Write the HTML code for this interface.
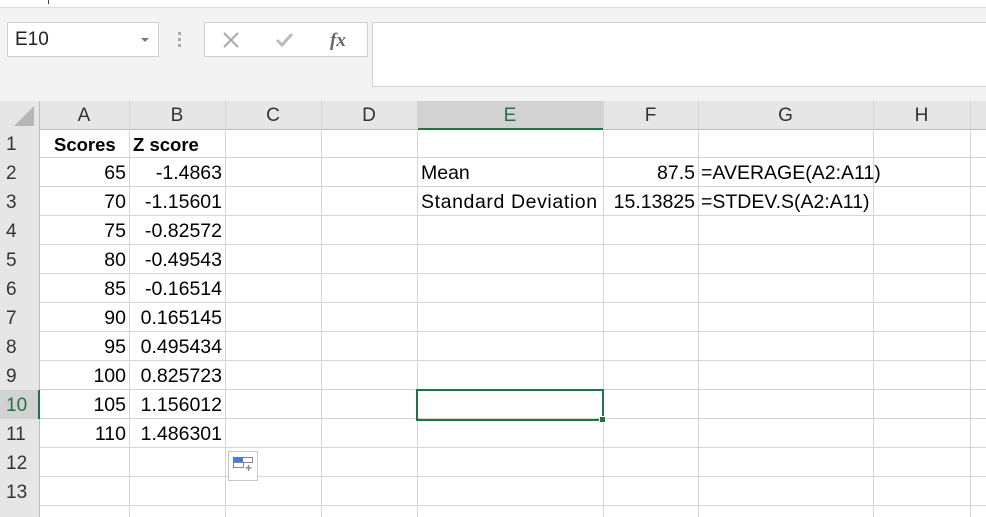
<!DOCTYPE html>
<html><head><style>
body{margin:0;width:986px;height:517px;overflow:hidden;background:#fff;font-family:"Liberation Sans",sans-serif;position:relative}
.a{position:absolute}
.t{position:absolute;font-size:19.5px;color:#000;line-height:29px;white-space:nowrap}
.r{text-align:right}
.h{position:absolute;font-size:19px;color:#333;line-height:29px;text-align:center}
.n{position:absolute;font-size:19px;color:#333;line-height:29px;left:6px}
</style></head><body>
<div class="a" style="left:0;top:0;width:986px;height:101px;background:#f3f3f3"></div>
<div class="a" style="left:0;top:0;width:986px;height:7px;background:#fff;border-bottom:1px solid #dadada"></div>
<div class="a" style="left:48px;top:0;width:1px;height:4px;background:#444"></div>
<div class="a" style="left:7px;top:22px;width:150px;height:33px;background:#fff;border:1px solid #d0d0d0"></div>
<div class="a" style="left:15px;top:22px;font-size:19px;line-height:35px;color:#222">E10</div>
<div class="a" style="left:141px;top:38px;width:0;height:0;border-left:4px solid transparent;border-right:4px solid transparent;border-top:4px solid #777"></div>
<div class="a" style="left:178px;top:32px;width:3px;height:3px;background:#aaa;box-shadow:0 6px 0 #aaa,0 12px 0 #aaa"></div>
<div class="a" style="left:204px;top:22px;width:162px;height:33px;background:#fff;border:1px solid #d0d0d0"></div>
<svg class="a" style="left:220px;top:30px" width="140" height="22"><path d="M4 3L18 17M18 3L4 17" stroke="#aaa" stroke-width="2"/><path d="M57 10l5 5l10-11" stroke="#bbb" stroke-width="3" fill="none"/><text x="110" y="16" font-family="Liberation Serif" font-style="italic" font-weight="bold" font-size="19" fill="#666">fx</text></svg>
<div class="a" style="left:372px;top:22px;width:614px;height:63px;background:#fff;border:1px solid #d0d0d0;border-right:none"></div>
<div class="a" style="left:0;top:101px;width:986px;height:28px;background:#e6e6e6;border-bottom:1px solid #bdbdbd"></div>
<div class="a" style="left:0;top:101px;width:39px;height:416px;background:#e6e6e6;border-right:1px solid #bdbdbd"></div>
<svg class="a" style="left:14px;top:106px" width="22" height="20"><path d="M20 0V20H0Z" fill="#b5b5b5"/></svg>
<div class="a" style="left:417px;top:101px;width:186px;height:27px;background:#d2d2d2;border-bottom:2px solid #217346"></div>
<div class="a" style="left:0;top:390px;width:38px;height:29px;background:#d2d2d2;border-right:2px solid #217346"></div>
<div class="a" style="left:40px;top:129px;width:946px;height:388px;background-image:repeating-linear-gradient(to bottom,transparent 0,transparent 28px,#d4d4d4 28px,#d4d4d4 29px)"></div>
<div class="a" style="left:129px;top:101px;width:1px;height:416px;background:#d4d4d4"></div>
<div class="a" style="left:225px;top:101px;width:1px;height:416px;background:#d4d4d4"></div>
<div class="a" style="left:321px;top:101px;width:1px;height:416px;background:#d4d4d4"></div>
<div class="a" style="left:417px;top:101px;width:1px;height:416px;background:#d4d4d4"></div>
<div class="a" style="left:603px;top:101px;width:1px;height:416px;background:#d4d4d4"></div>
<div class="a" style="left:698px;top:101px;width:1px;height:416px;background:#d4d4d4"></div>
<div class="a" style="left:873px;top:101px;width:1px;height:416px;background:#d4d4d4"></div>
<div class="a" style="left:970px;top:101px;width:1px;height:416px;background:#d4d4d4"></div>
<div class="h" style="left:39px;top:101px;width:90px">A</div>
<div class="h" style="left:129px;top:101px;width:96px">B</div>
<div class="h" style="left:225px;top:101px;width:96px">C</div>
<div class="h" style="left:321px;top:101px;width:96px">D</div>
<div class="h" style="left:417px;top:101px;width:186px;color:#217346">E</div>
<div class="h" style="left:603px;top:101px;width:95px">F</div>
<div class="h" style="left:698px;top:101px;width:175px">G</div>
<div class="h" style="left:873px;top:101px;width:97px">H</div>
<div class="n" style="top:130px">1</div>
<div class="n" style="top:159px">2</div>
<div class="n" style="top:188px">3</div>
<div class="n" style="top:217px">4</div>
<div class="n" style="top:246px">5</div>
<div class="n" style="top:275px">6</div>
<div class="n" style="top:304px">7</div>
<div class="n" style="top:333px">8</div>
<div class="n" style="top:362px">9</div>
<div class="n" style="top:391px;color:#217346">10</div>
<div class="n" style="top:420px">11</div>
<div class="n" style="top:449px">12</div>
<div class="n" style="top:478px">13</div>
<div class="t" style="left:54px;top:130px;font-weight:bold;font-size:18.5px">Scores</div>
<div class="t" style="left:133px;top:130px;font-weight:bold;font-size:18.5px">Z score</div>
<div class="t r" style="left:39px;top:159px;width:87px">65</div>
<div class="t r" style="left:39px;top:188px;width:87px">70</div>
<div class="t r" style="left:39px;top:217px;width:87px">75</div>
<div class="t r" style="left:39px;top:246px;width:87px">80</div>
<div class="t r" style="left:39px;top:275px;width:87px">85</div>
<div class="t r" style="left:39px;top:304px;width:87px">90</div>
<div class="t r" style="left:39px;top:333px;width:87px">95</div>
<div class="t r" style="left:39px;top:362px;width:87px">100</div>
<div class="t r" style="left:39px;top:391px;width:87px">105</div>
<div class="t r" style="left:39px;top:420px;width:87px">110</div>
<div class="t r" style="left:125px;top:159px;width:97px">-1.4863</div>
<div class="t r" style="left:125px;top:188px;width:97px">-1.15601</div>
<div class="t r" style="left:125px;top:217px;width:97px">-0.82572</div>
<div class="t r" style="left:125px;top:246px;width:97px">-0.49543</div>
<div class="t r" style="left:125px;top:275px;width:97px">-0.16514</div>
<div class="t r" style="left:125px;top:304px;width:97px">0.165145</div>
<div class="t r" style="left:125px;top:333px;width:97px">0.495434</div>
<div class="t r" style="left:125px;top:362px;width:97px">0.825723</div>
<div class="t r" style="left:125px;top:391px;width:97px">1.156012</div>
<div class="t r" style="left:125px;top:420px;width:97px">1.486301</div>
<div class="t" style="left:421px;top:159px">Mean</div>
<div class="t" style="left:421px;top:188px;letter-spacing:0.6px">Standard Deviation</div>
<div class="t r" style="left:600px;top:159px;width:95px">87.5</div>
<div class="t r" style="left:600px;top:188px;width:95px">15.13825</div>
<div class="t" style="left:701px;top:159px">=AVERAGE(A2:A11)</div>
<div class="t" style="left:701px;top:188px">=STDEV.S(A2:A11)</div>
<div class="a" style="left:416px;top:389px;width:184px;height:28px;border:2px solid #217346"></div>
<div class="a" style="left:599px;top:416px;width:5px;height:5px;background:#217346;border:1px solid #fff"></div>
<div class="a" style="left:228px;top:451px;width:28px;height:28px;background:#fff;border:1px solid #c6c6c6"></div>
<div class="a" style="left:233px;top:457px;width:10px;height:5px;background:#3f7fe0"></div>
<div class="a" style="left:243px;top:457px;width:9px;height:4px;border:1px solid #888;border-left:none"></div>
<div class="a" style="left:233px;top:462px;width:9px;height:4px;border:1px solid #888"></div>
<div class="t" style="left:245px;top:461px;font-size:12px;line-height:14px;color:#888;font-weight:bold">+</div>
</body></html>
